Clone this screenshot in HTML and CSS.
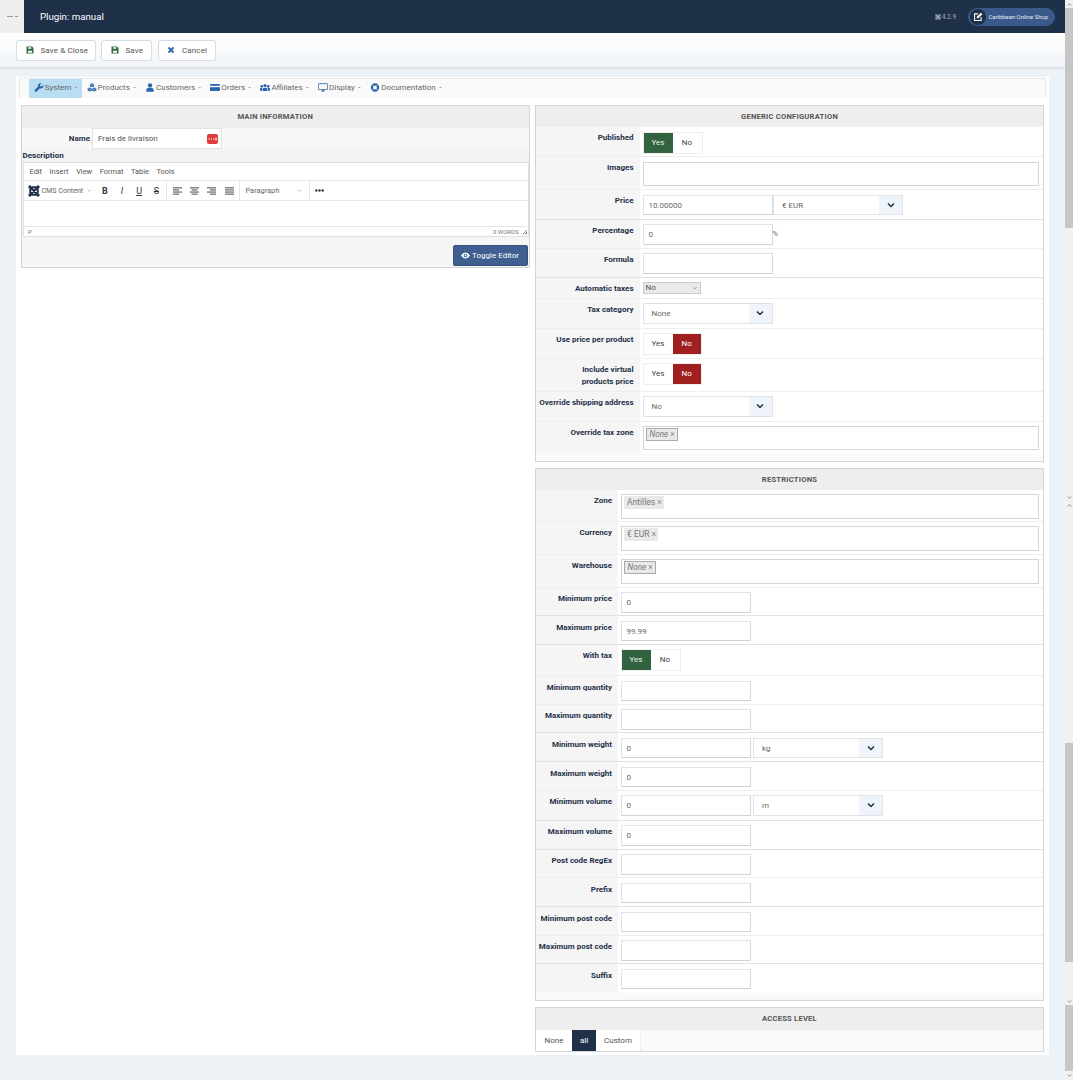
FILE: index.html
```html
<!DOCTYPE html>
<html lang="en">
<head>
<meta charset="utf-8">
<title>Plugin: manual</title>
<link rel="stylesheet" href="styles.css">
</head>
<body>
<svg class="defs" width="0" height="0" aria-hidden="true">
  <symbol id="i-save" viewBox="0 0 16 16"><path fill="currentColor" fill-rule="evenodd" d="M1 1h11l3 3v11H1zM4.500 2.500v3h6v-3zM4 9.500v4h8v-4z"/></symbol>
  <symbol id="i-x" viewBox="0 0 16 16"><path fill="none" stroke="currentColor" stroke-width="3.6" d="M3 3l10 10M13 3L3 13"/></symbol>
  <symbol id="i-chev" viewBox="0 0 16 16"><path fill="none" stroke="currentColor" d="M2 5l6 6 6-6"/></symbol>
  <symbol id="i-joomla" viewBox="0 0 16 16"><g fill="none" stroke="currentColor" stroke-width="2.6"><path d="M3 3l10 10M13 3L3 13M5 3h6M5 13h6M3 5v6M13 5v6"/></g><g fill="currentColor"><circle cx="2.600" cy="2.600" r="2.200"/><circle cx="13.400" cy="2.600" r="2.200"/><circle cx="2.600" cy="13.400" r="2.200"/><circle cx="13.400" cy="13.400" r="2.200"/></g></symbol>
  <symbol id="i-wrench" viewBox="0 0 16 16"><path fill="currentColor" d="M15.500 3.600l-2.900 2.800-2.500-.5-.5-2.500L12.400.6A4.500 4.500 0 0 0 6.500 6.300L.8 12a2.200 2.200 0 0 0 3.100 3.200l5.800-5.700a4.500 4.500 0 0 0 5.800-5.900z"/></symbol>
  <symbol id="i-cubes" viewBox="0 0 16 16"><path fill="currentColor" d="M8 .6l3.700 1.500v4L8 7.700 4.300 6.100v-4zM4 8l3.600 1.500v4.200L4 15.300.3 13.700V9.500zM12 8l3.700 1.500v4.200L12 15.300l-3.600-1.600V9.500z"/><path stroke="#fafafa" stroke-width=".6" fill="none" d="M4.300 2.100L8 3.700l3.700-1.600M8 3.700v4M.3 9.500L4 11.100l3.600-1.600M4 11.100v4.200M8.400 9.500l3.600 1.600 3.700-1.600M12 11.100v4.200"/></symbol>
  <symbol id="i-user" viewBox="0 0 16 16"><circle cx="8" cy="4.300" r="3.800" fill="currentColor"/><path fill="currentColor" d="M1.500 15.500v-2.700C1.500 10 3.800 8.500 5.500 8.500h5c1.700 0 4 1.500 4 4.300v2.700z"/></symbol>
  <symbol id="i-card" viewBox="0 0 16 12"><path fill="currentColor" d="M0 1.500Q0 .5 1 .5h14q1 0 1 1V3H0zM0 5.500h16v5q0 1-1 1H1q-1 0-1-1z"/></symbol>
  <symbol id="i-users" viewBox="0 0 16 12"><g fill="currentColor"><circle cx="8" cy="2.800" r="2.500"/><circle cx="2.800" cy="4" r="2"/><circle cx="13.200" cy="4" r="2"/><path d="M4.500 11.500V8.500q0-2 2-2h3q2 0 2 2v3zM0 10V8q0-1.500 1.500-1.500h2v5H1zM16 10V8q0-1.500-1.500-1.500h-2v5H15z"/></g></symbol>
  <symbol id="i-desktop" viewBox="0 0 16 14"><path fill="none" stroke="currentColor" stroke-width="1.300" d="M1.600.8h12.800q1 0 1 1v7.600q0 1-1 1H1.600q-1 0-1-1V1.800q0-1 1-1z"/><path fill="currentColor" d="M6.500 10.500h3v2h1.500v1H5v-1h1.500z"/></symbol>
  <symbol id="i-ring" viewBox="0 0 16 16"><circle cx="8" cy="8" r="5.400" fill="none" stroke="currentColor" stroke-width="4"/><path stroke="#fff" stroke-width="1" d="M3 3l3 3M13 3l-3 3M3 13l3-3M13 13l-3-3"/></symbol>
  <symbol id="i-edit" viewBox="0 0 16 16"><path fill="none" stroke="currentColor" stroke-width="1.700" d="M8 3H2.500v10.500H13V8"/><path fill="currentColor" d="M6 7.500L12.500 1 15 3.500 8.500 10H6z"/></symbol>
  <symbol id="i-eye" viewBox="0 0 16 12"><path fill="currentColor" fill-rule="evenodd" d="M0 6q3.500-5.500 8-5.500T16 6q-3.500 5.500-8 5.500T0 6zm8-3.300a3.300 3.300 0 1 0 0 6.600 3.300 3.300 0 0 0 0-6.600z"/><circle cx="8" cy="6" r="1.700" fill="currentColor"/></symbol>
  <symbol id="i-left" viewBox="0 0 12 10"><path stroke="currentColor" stroke-width="1.200" d="M0 .8h12M0 3.600h8M0 6.400h12M0 9.200h8"/></symbol>
  <symbol id="i-center" viewBox="0 0 12 10"><path stroke="currentColor" stroke-width="1.200" d="M0 .8h12M2 3.600h8M0 6.400h12M2 9.200h8"/></symbol>
  <symbol id="i-right" viewBox="0 0 12 10"><path stroke="currentColor" stroke-width="1.200" d="M0 .8h12M4 3.600h8M0 6.400h12M4 9.200h8"/></symbol>
  <symbol id="i-justify" viewBox="0 0 12 10"><path stroke="currentColor" stroke-width="1.200" d="M0 .8h12M0 3.600h12M0 6.400h12M0 9.200h12"/></symbol>
  <symbol id="i-dots4" viewBox="0 0 11 10"><path stroke="currentColor" stroke-width="1.200" d="M1.500 5h1.200M3.800 5h1.200M6 5h1.200M9 3.500v3"/></symbol>
  <symbol id="i-dots3" viewBox="0 0 9 3"><g fill="currentColor"><circle cx="1.300" cy="1.500" r="1.200"/><circle cx="4.500" cy="1.500" r="1.200"/><circle cx="7.700" cy="1.500" r="1.200"/></g></symbol>
</svg>
<div class="app">
  <div class="main">
    <header class="topbar">
      <div class="brand"><span class="brand-dash"></span><span class="brand-dot"></span></div>
      <div class="page-title">Plugin: manual</div>
      <div class="version"><svg class="version-icon"><use href="#i-joomla"/></svg>4.2.9</div>
      <a class="site-pill"><span class="site-circle"><svg class="site-icon"><use href="#i-edit"/></svg></span>Caribbean Online Shop</a>
    </header>
    <div class="actions">
      <button class="act act-first"><svg class="act-icon green"><use href="#i-save"/></svg>Save &amp; Close</button>
      <button class="act act-save"><svg class="act-icon green"><use href="#i-save"/></svg>Save</button>
      <button class="act act-cancel"><svg class="act-icon blue"><use href="#i-x"/></svg>Cancel</button>
    </div>
    <main class="sheet">
      <nav class="tabs">
        <a class="tab tab-on"><svg class="tab-icon"><use href="#i-wrench"/></svg>System<span class="caret">-</span></a>
        <a class="tab"><svg class="tab-icon"><use href="#i-cubes"/></svg>Products<span class="caret">-</span></a>
        <a class="tab"><svg class="tab-icon"><use href="#i-user"/></svg>Customers<span class="caret">-</span></a>
        <a class="tab"><svg class="tab-icon"><use href="#i-card"/></svg>Orders<span class="caret">-</span></a>
        <a class="tab"><svg class="tab-icon"><use href="#i-users"/></svg>Affiliates<span class="caret">-</span></a>
        <a class="tab"><svg class="tab-icon"><use href="#i-desktop"/></svg>Display<span class="caret">-</span></a>
        <a class="tab"><svg class="tab-icon"><use href="#i-ring"/></svg>Documentation<span class="caret">-</span></a>
      </nav>
      <div class="columns">
        <div class="col-left">
          <section class="panel">
            <h2 class="panel-head">MAIN INFORMATION</h2>
            <div class="name-row">
              <span class="name-label">Name</span>
              <div class="name-input">Frais de livraison<span class="pw-btn"><svg class="pw-icon"><use href="#i-dots4"/></svg></span></div>
            </div>
            <div class="desc-label">Description</div>
            <div class="editor">
              <div class="ed-menu"><span>Edit</span><span>Insert</span><span>View</span><span>Format</span><span>Table</span><span>Tools</span></div>
              <div class="ed-tools">
                <div class="ed-group ed-g1">
                  <svg class="ed-joomla"><use href="#i-joomla"/></svg><span class="ed-cms">CMS Content</span><svg class="ed-chev"><use href="#i-chev"/></svg>
                  <b class="ed-b">B</b><i class="ed-i">I</i><u class="ed-u">U</u><s class="ed-s">S</s>
                </div>
                <div class="ed-group ed-g2">
                  <svg class="ed-align"><use href="#i-left"/></svg><svg class="ed-align"><use href="#i-center"/></svg><svg class="ed-align"><use href="#i-right"/></svg><svg class="ed-align"><use href="#i-justify"/></svg>
                </div>
                <div class="ed-group ed-g3"><span class="ed-para">Paragraph</span><svg class="ed-chev"><use href="#i-chev"/></svg></div>
                <svg class="ed-more"><use href="#i-dots3"/></svg>
              </div>
              <div class="ed-body"></div>
              <div class="ed-status"><span>P</span><span class="ed-words">0 WORDS</span><span class="ed-grip"></span></div>
            </div>
            <div class="ed-foot"><button class="toggle-btn"><svg class="eye"><use href="#i-eye"/></svg>Toggle Editor</button></div>
          </section>
        </div>
        <div class="col-right">
          <section class="panel">
            <h2 class="panel-head">GENERIC CONFIGURATION</h2>
            <div class="form form-wide">
              <div class="row h-30"><label class="lbl">Published</label><div class="ctl"><div class="switch"><span class="sw sw-yes">Yes</span><span class="sw">No</span></div></div></div>
              <div class="row h-33"><label class="lbl">Images</label><div class="ctl"><div class="area"></div></div></div>
              <div class="row h-30 strong"><label class="lbl">Price</label><div class="ctl"><div class="inline"><div class="input">10.00000</div><div class="select flush"><span>€ EUR</span><span class="sel-arrow"><svg class="chev"><use href="#i-chev"/></svg></span></div></div></div></div>
              <div class="row h-29"><label class="lbl">Percentage</label><div class="ctl ctl-t4"><div class="inline"><div class="input">0</div><span class="unit">%</span></div></div></div>
              <div class="row h-28 strong"><label class="lbl">Formula</label><div class="ctl ctl-t4"><div class="input"></div></div></div>
              <div class="row h-21"><label class="lbl">Automatic taxes</label><div class="ctl"><div class="native">No<svg class="native-chev"><use href="#i-chev"/></svg></div></div></div>
              <div class="row h-30"><label class="lbl">Tax category</label><div class="ctl"><div class="select"><span>None</span><span class="sel-arrow"><svg class="chev"><use href="#i-chev"/></svg></span></div></div></div>
              <div class="row h-30"><label class="lbl">Use price per product</label><div class="ctl"><div class="switch"><span class="sw">Yes</span><span class="sw sw-no">No</span></div></div></div>
              <div class="row h-33"><label class="lbl">Include virtual<br>products price</label><div class="ctl"><div class="switch"><span class="sw">Yes</span><span class="sw sw-no">No</span></div></div></div>
              <div class="row h-30"><label class="lbl">Override shipping address</label><div class="ctl"><div class="select"><span>No</span><span class="sel-arrow"><svg class="chev"><use href="#i-chev"/></svg></span></div></div></div>
              <div class="row h-32 last"><label class="lbl">Override tax zone</label><div class="ctl ctl-t4"><div class="area"><span class="tag tag-none">None<span class="tag-x">×</span></span></div></div></div>
            </div>
          </section>
          <section class="panel">
            <h2 class="panel-head">RESTRICTIONS</h2>
            <div class="form form-narrow">
              <div class="row h-32"><label class="lbl">Zone</label><div class="ctl ctl-t4"><div class="area"><span class="tag">Antilles<span class="tag-x">×</span></span></div></div></div>
              <div class="row h-33"><label class="lbl">Currency</label><div class="ctl ctl-t4"><div class="area"><span class="tag">€ EUR<span class="tag-x">×</span></span></div></div></div>
              <div class="row h-33"><label class="lbl">Warehouse</label><div class="ctl ctl-t4"><div class="area"><span class="tag tag-none">None<span class="tag-x">×</span></span></div></div></div>
              <div class="row h-28 strong"><label class="lbl">Minimum price</label><div class="ctl ctl-t4"><div class="input">0</div></div></div>
              <div class="row h-28 strong"><label class="lbl">Maximum price</label><div class="ctl ctl-t4"><div class="input">99.99</div></div></div>
              <div class="row h-31"><label class="lbl">With tax</label><div class="ctl ctl-t4"><div class="switch"><span class="sw sw-yes">Yes</span><span class="sw">No</span></div></div></div>
              <div class="row h-28"><label class="lbl">Minimum quantity</label><div class="ctl ctl-t4"><div class="input"></div></div></div>
              <div class="row h-28 strong"><label class="lbl">Maximum quantity</label><div class="ctl ctl-t4"><div class="input"></div></div></div>
              <div class="row h-29 strong"><label class="lbl">Minimum weight</label><div class="ctl ctl-t4"><div class="inline"><div class="input">0</div><div class="select gap"><span>kg</span><span class="sel-arrow"><svg class="chev"><use href="#i-chev"/></svg></span></div></div></div></div>
              <div class="row h-28"><label class="lbl">Maximum weight</label><div class="ctl ctl-t4"><div class="input">0</div></div></div>
              <div class="row h-30 strong"><label class="lbl">Minimum volume</label><div class="ctl ctl-t4"><div class="inline"><div class="input">0</div><div class="select gap"><span>m</span><span class="sel-arrow"><svg class="chev"><use href="#i-chev"/></svg></span></div></div></div></div>
              <div class="row h-29 strong"><label class="lbl">Maximum volume</label><div class="ctl ctl-t4"><div class="input">0</div></div></div>
              <div class="row h-28"><label class="lbl">Post code RegEx</label><div class="ctl ctl-t4"><div class="input"></div></div></div>
              <div class="row h-29 strong"><label class="lbl">Prefix</label><div class="ctl ctl-t4"><div class="input"></div></div></div>
              <div class="row h-28"><label class="lbl">Minimum post code</label><div class="ctl ctl-t4"><div class="input"></div></div></div>
              <div class="row h-28 strong"><label class="lbl">Maximum post code</label><div class="ctl ctl-t4"><div class="input"></div></div></div>
              <div class="row h-28 last"><label class="lbl">Suffix</label><div class="ctl ctl-t4"><div class="input"></div></div></div>
            </div>
          </section>
          <section class="panel panel-access">
            <h2 class="panel-head">ACCESS LEVEL</h2>
            <div class="access"><span class="acc acc-none">None</span><span class="acc acc-all">all</span><span class="acc acc-custom">Custom</span></div>
          </section>
        </div>
      </div>
    </main>
  </div>
  <aside class="scrollbars" aria-hidden="true">
    <div class="sb-btn"><svg class="sb-arrow sb-up"><use href="#i-chev"/></svg></div>
    <div class="sb-thumb sb-t1"></div>
    <div class="sb-track sb-tr1"></div>
    <div class="sb-btn"><svg class="sb-arrow"><use href="#i-chev"/></svg></div>
    <div class="sb-btn"><svg class="sb-arrow sb-up"><use href="#i-chev"/></svg></div>
    <div class="sb-track sb-tr2"></div>
    <div class="sb-thumb sb-t2"></div>
    <div class="sb-track sb-tr3"></div>
    <div class="sb-btn"><svg class="sb-arrow"><use href="#i-chev"/></svg></div>
    <div class="sb-thumb sb-t3"></div>
    <div class="sb-btn"><svg class="sb-arrow"><use href="#i-chev"/></svg></div>
  </aside>
</div>
</body>
</html>
```
FILE: styles.css
```css
* { box-sizing: border-box; }
html, body { margin: 0; height: 1080px; overflow: hidden; }
body { background: #edf2f6; font-family: Roboto, "Liberation Sans", sans-serif; font-size: 8px; color: #555; }
.defs { position: absolute; }
.app { display: flex; height: 1080px; }
.main { flex: 1; min-width: 0; }

/* top bar */
.topbar { height: 33px; background: #1f3049; display: flex; align-items: center; color: #fff; }
.brand { width: 23.5px; height: 33px; background: #efefef; display: flex; align-items: center; padding-left: 7px; gap: 2px; }
.brand-dash { width: 6px; height: 1px; background: #999; }
.brand-dot { width: 3px; height: 1px; background: #999; }
.page-title { margin-left: 16.5px; font-size: 9.7px; flex: 1; }
.version { display: flex; align-items: center; color: #a9b1bd; font-size: 6.3px; margin-right: 12px; gap: 1px; }
.version-icon { width: 6px; height: 6px; }
.site-pill { width: 87px; height: 18px; background: #3a5a8c; border-radius: 9px; display: flex; align-items: center; gap: 2.5px; padding-left: 2px; font-size: 5.9px; color: #e6ebf2; margin-right: 10px; white-space: nowrap; }
.site-circle { width: 16px; height: 16px; border-radius: 50%; background: #1f3049; display: flex; align-items: center; justify-content: center; flex: none; }
.site-icon { width: 10px; height: 10px; color: #fff; }

/* action bar */
.actions { height: 34px; background: linear-gradient(#fff, #f0f4f8); box-shadow: 0 1px 3px rgba(30,50,80,.15); display: flex; align-items: center; padding-left: 16px; gap: 5.5px; }
.act { height: 21px; background: #fff; border: 1px solid #d7dce2; border-radius: 3px; font: 8px Roboto, sans-serif; color: #555; display: flex; align-items: center; padding: 0 0 0 8.5px; letter-spacing: .015em; }
.act-first { width: 79.5px; }
.act-save { width: 51px; }
.act-cancel { width: 58px; }
.act-icon { width: 8px; height: 8px; margin-right: 7px; flex: none; }
.green { color: #2f6b3c; }
.blue { color: #2a64ad; }

/* sheet */
.sheet { margin: 10px 16.5px 0 16px; height: 978px; background: #fff; padding-top: .5px; }
.tabs { margin: 0 3px 0 2.5px; height: 20px; background: #fafafa; border-top: 1px solid #e8e8e8; border-left: 1px solid #e8e8e8; border-right: 1px solid #e8e8e8; display: flex; padding-left: 9.5px; color: #666; }
.tab { height: 19px; display: flex; align-items: center; font-size: 8px; padding: 0 4.8px 1.5px; white-space: nowrap; }
.tab-on { background: #b9def3; }
.tab-icon { width: 10px; height: 9px; margin-right: 1px; color: #2a64ad; flex: none; }
.caret { margin-left: 3.5px; }

.columns { display: flex; gap: 5.5px; margin: 7.5px 4.5px 0 5px; }
.col-left { width: 508.5px; flex: none; }
.col-right { flex: 1; min-width: 0; }

/* panels */
.panel { border: 1px solid #d5d5d5; background: #f9f9f9; }
.col-left .panel { background: #f5f5f5; height: 162.5px; }
.col-left .panel-head { height: 22px; }
.col-right .panel + .panel { margin-top: 6px; }
.panel-head { margin: 0; height: 21px; background: #eee; font: bold 7.6px/21px Roboto, sans-serif; text-align: center; color: #555; letter-spacing: .03em; }

/* left panel */
.name-row { height: 21px; display: flex; align-items: center; background: #f8f8f8; }
.name-label { width: 69.5px; text-align: right; font-weight: bold; color: #1f3049; padding-right: 1.5px; }
.name-input { width: 130.5px; height: 21px; background: #fff; border: 1px solid #e2e2e2; display: flex; align-items: center; justify-content: space-between; padding: 0 3px 0 5.5px; }
.pw-btn { width: 11px; height: 10px; background: #e03c3c; border-radius: 2px; color: #fff; display: flex; }
.pw-icon { width: 11px; height: 10px; }
.desc-label { height: 12.5px; line-height: 13px; font-weight: bold; color: #1f3049; background: #f2f2f2; padding-left: .5px; }
.editor { margin-left: 1px; background: #fff; border: 1px solid #e0e0e0; }
.ed-menu { height: 18.5px; display: flex; align-items: center; gap: 7.6px; padding-left: 5.5px; color: #555; font-size: 7.4px; border-bottom: 1px solid #e6e6e6; }
.ed-tools { height: 20px; display: flex; border-bottom: 1px solid #e6e6e6; align-items: center; }
.ed-group { height: 19px; display: flex; align-items: center; border-right: 1px solid #e6e6e6; flex: none; }
.ed-g1 { width: 142.5px; padding-left: 3.5px; }
.ed-joomla { width: 12px; height: 12px; color: #1f3049; flex: none; }
.ed-cms { margin-left: 2px; font-size: 7.1px; color: #666; white-space: nowrap; }
.ed-chev { width: 5px; height: 5px; color: #888; margin-left: 4px; flex: none; stroke-width: 1.8; }
.ed-b, .ed-i, .ed-u, .ed-s { width: 17.2px; text-align: center; color: #333; font-size: 9px; flex: none; }
.ed-b { margin-left: 4px; }
.ed-g2 { width: 73px; padding-left: 6px; gap: 8.4px; }
.ed-align { width: 9px; height: 8px; color: #333; flex: none; }
.ed-g3 { width: 70px; padding-left: 6px; justify-content: space-between; padding-right: 7px; }
.ed-para { font-size: 7.4px; color: #666; }
.ed-more { width: 9px; height: 3px; margin-left: 5.5px; color: #333; }
.ed-body { height: 26px; border-bottom: 1px solid #e6e6e6; }
.ed-status { height: 8.5px; display: flex; align-items: center; font-size: 6px; color: #777; padding-left: 4px; }
.ed-words { margin-left: auto; margin-right: 3px; }
.ed-grip { width: 5px; height: 5px; margin-right: 1px; background: linear-gradient(135deg, transparent 50%, #888 50%, #888 60%, transparent 60%, transparent 75%, #888 75%); }
.ed-foot { display: flex; justify-content: flex-end; padding: 8.5px 1px 0 0; }
.toggle-btn { width: 75px; height: 21px; background: #3e5f8f; border: 1px solid #35527c; border-radius: 2px; color: #fff; font: 8px Roboto, sans-serif; display: flex; align-items: center; justify-content: center; gap: 2px; padding: 0; }
.eye { width: 9px; height: 7px; color: #fff; }

/* form rows */
.row { display: flex; border-bottom: 1px solid #eee; background: #fff; }
.row.strong { border-bottom-color: #e1e1e1; }
.row.last { border-bottom: 0; }
.h-21 { height: 21px; } .h-28 { height: 28.5px; } .h-29 { height: 29px; } .h-30 { height: 30px; }
.h-31 { height: 31.6px; } .h-32 { height: 32px; } .h-33 { height: 33px; }
.lbl { flex: none; background: #f5f5f5; text-align: right; font-weight: bold; color: #1f3049; line-height: 12px; padding-top: 5px; padding-right: 6px; }
.form-wide .lbl { width: 103.5px; padding-left: 1px; }
.form-narrow .lbl { width: 82px; padding-top: 5.5px; }
.form { padding-bottom: 7px; }
.ctl { flex: 1; min-width: 0; padding: 4.5px 4px 0 3px; }
.ctl-t4 { padding-top: 4px; }
.form-narrow .ctl { padding-left: 2.5px; padding-top: 4.5px; }
.inline { display: flex; align-items: flex-start; }
.input { width: 130px; height: 20.5px; flex: none; background: #fff; border: 1px solid #e0e4e9; border-bottom-color: #ccd3dc; border-right-color: #d4d9df; line-height: 19px; padding-left: 5px; color: #666; }
.area { height: 24.5px; border: 1px solid #d5d5d5; background: #fff; padding: 1px 2px; }
.select { width: 130px; height: 20.5px; flex: none; background: #fff; border: 1px solid #e0e4e9; display: flex; justify-content: space-between; line-height: 19px; padding-left: 8px; color: #666; }
.select.flush { margin-left: .5px; }
.select.gap { margin-left: 2.5px; }
.sel-arrow { width: 23px; background: #eff4fa; display: flex; align-items: center; justify-content: center; }
.chev { width: 8px; height: 8px; color: #1f3049; stroke-width: 3; }
.unit { color: #666; line-height: 20px; font-size: 7.5px; }
.native { width: 58px; height: 12px; background: #e9e9e9; border: 1px solid #ccc; line-height: 10px; padding-left: 2px; color: #555; display: flex; justify-content: space-between; align-items: center; padding-right: 3px; }
.native-chev { width: 4px; height: 4px; color: #555; stroke-width: 2.2; }
.switch { display: inline-flex; height: 22px; border: 1px solid #eee; }
.sw { width: 29px; line-height: 20px; text-align: center; color: #444; background: #fff; }
.sw-yes { background: #33623f; color: #e8f0ea; }
.sw-no { background: #a01f1f; color: #fff; width: 28.5px; }
.tag { display: inline-block; height: 13px; line-height: 12px; background: #e9e9e9; padding: 0 2px 0 3.5px; color: #777; font-size: 8.5px; }
.tag-none { font-style: italic; border: 1px solid #aaa; padding-left: 3px; font-size: 8.2px; line-height: 11px; }
.tag-x { font-style: normal; color: #888; margin-left: 2px; }

/* access */
.col-right .panel-access { margin-top: 6px; }
.panel-access .panel-head { height: 22px; }
.access { display: flex; height: 21px; background: #fafafa; color: #555; }
.acc { line-height: 22px; text-align: center; background: #fff; }
.acc-none { width: 36px; }
.acc-all { width: 24px; background: #1f3049; color: #fff; }
.acc-custom { width: 45px; border-right: 1px solid #eee; }

/* scrollbars */
.scrollbars { width: 8px; flex: none; display: flex; flex-direction: column; background: #f1f1f1; }
.sb-btn { height: 8px; display: flex; align-items: center; justify-content: center; flex: none; }
.sb-arrow { width: 5px; height: 5px; color: #666; stroke-width: 2.2; }
.sb-up { transform: rotate(180deg); }
.sb-thumb { background: #c6c6c6; flex: none; }
.sb-t1 { height: 220px; }
.sb-tr1 { height: 265px; flex: none; }
.sb-tr2 { height: 234px; flex: none; }
.sb-t2 { height: 219px; }
.sb-tr3 { height: 35px; flex: none; }
.sb-t3 { height: 66px; }
```
